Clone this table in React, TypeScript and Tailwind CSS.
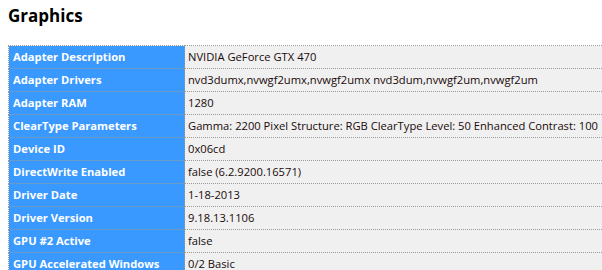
import React from "react";

const rows: [string, string][] = [
  ["Adapter Description", "NVIDIA GeForce GTX 470"],
  ["Adapter Drivers", "nvd3dumx,nvwgf2umx,nvwgf2umx nvd3dum,nvwgf2um,nvwgf2um"],
  ["Adapter RAM", "1280"],
  ["ClearType Parameters", "Gamma: 2200 Pixel Structure: RGB ClearType Level: 50 Enhanced Contrast: 100"],
  ["Device ID", "0x06cd"],
  ["DirectWrite Enabled", "false (6.2.9200.16571)"],
  ["Driver Date", "1-18-2013"],
  ["Driver Version", "9.18.13.1106"],
  ["GPU #2 Active", "false"],
  ["GPU Accelerated Windows", "0/2 Basic"],
];

export default function App() {
  return (
    <div
      className="w-[602px] h-[270px] overflow-hidden bg-white pl-2"
      style={{ fontFamily: '"Open Sans", "Noto Sans", sans-serif' }}
    >
      <h1 className="text-[17px] font-bold text-black leading-[20px] pt-[6px] h-[45px]">Graphics</h1>
      <table className="w-[640px] border-collapse text-[11.2px] leading-[22px]">
        <tbody>
          {rows.map(([k, v]) => (
            <tr key={k}>
              <td className="w-[176px] bg-[#3a99ff] text-white font-bold pl-[4px] border border-dotted border-[#9a9a9a] whitespace-nowrap">
                {k}
              </td>
              <td className="bg-[#f0f0f0] text-[#1a0a0a] pl-[3px] border border-dotted border-[#9a9a9a] whitespace-nowrap">
                {v}
              </td>
            </tr>
          ))}
        </tbody>
      </table>
    </div>
  );
}
